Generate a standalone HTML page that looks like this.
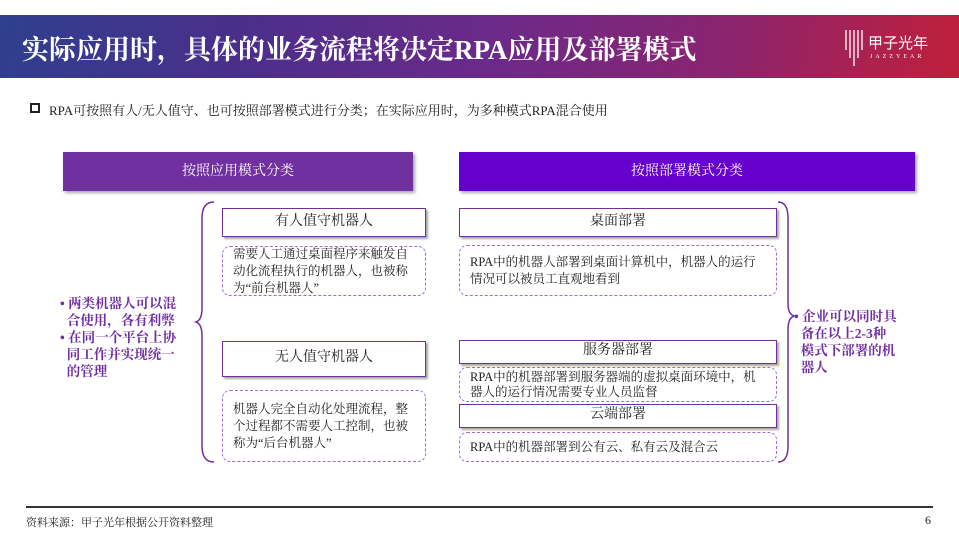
<!DOCTYPE html>
<html><head><meta charset="utf-8"><style>
*{margin:0;padding:0;box-sizing:border-box}
body{width:959px;height:539px;background:#fff;position:relative;overflow:hidden;font-family:"Liberation Serif","Noto Serif CJK SC",serif;color:#222}
.a{position:absolute}
.title{left:0;top:15px;width:959px;height:63px;background:linear-gradient(100deg,#2f3f8f 0%,#4a2f8a 25%,#6a2a8a 50%,#8a2470 75%,#c01f3a 100%)}
.title h1{position:absolute;left:22px;top:13px;color:#fff;font-size:27px;font-weight:bold;letter-spacing:0px;white-space:nowrap}
.hd{color:#fff;font-size:14px;text-align:center;line-height:39px;box-shadow:2px 2px 3px rgba(0,0,0,.35)}
.bx{border:1.5px solid #7030a0;background:#fff;text-align:center;font-size:14px;box-shadow:2px 2px 2px rgba(0,0,0,.35)}
.db{border:1.5px dashed #9a6fd0;border-radius:8px;font-size:12.5px;line-height:17px;padding:0 10px;display:flex;align-items:center}
.pt{color:#7030a0;font-weight:bold;font-size:13.5px;line-height:17px}
</style></head><body>
<div class="a title"><h1>实际应用时，具体的业务流程将决定RPA应用及部署模式</h1>
<svg class="a" style="left:843px;top:13px" width="20" height="38"><g stroke="#fff" stroke-width="1.3" fill="none"><path d="M3 2v20M7 2v28M11 2v36M15 2v28M19 2v20"/></g></svg>
<div class="a" style="left:868px;top:17px;color:#fff;font-size:15px;font-family:'Noto Sans CJK SC',sans-serif;white-space:nowrap">甲子光年</div>
<div class="a" style="left:870px;top:39px;color:#fff;font-size:6px;letter-spacing:3px">JAZZYEAR</div>
</div>
<div class="a" style="left:30px;top:103px;width:10px;height:10px;border:2px solid #222"></div>
<div class="a" style="left:49px;top:100px;font-size:13px;white-space:nowrap">RPA可按照有人/无人值守、也可按照部署模式进行分类；在实际应用时，为多种模式RPA混合使用</div>

<div class="a hd" style="left:63px;top:152px;width:350px;height:39px;background:#7030a0">按照应用模式分类</div>
<div class="a hd" style="left:459px;top:152px;width:456px;height:39px;background:#6600cc">按照部署模式分类</div>

<svg class="a" style="left:190px;top:198px" width="30" height="270"><path d="M24 4 Q12 4 12 20 L12 110 Q12 122 6 124 Q12 126 12 138 L12 248 Q12 264 24 264" stroke="#7030a0" stroke-width="1.5" fill="none"/></svg>
<svg class="a" style="left:772px;top:198px" width="30" height="270"><path d="M6 4 Q16 4 16 20 L16 106 Q16 116 22 118 Q16 120 16 132 L16 248 Q16 264 6 264" stroke="#7030a0" stroke-width="1.5" fill="none"/></svg>

<div class="a pt" style="left:60px;top:295px;width:140px">• 两类机器人可以混<br>&nbsp;&nbsp;合使用，各有利弊<br>• 在同一个平台上协<br>&nbsp;&nbsp;同工作并实现统一<br>&nbsp;&nbsp;的管理</div>
<div class="a pt" style="left:794px;top:308px;width:120px">• 企业可以同时具<br>&nbsp;&nbsp;备在以上2-3种<br>&nbsp;&nbsp;模式下部署的机<br>&nbsp;&nbsp;器人</div>

<div class="a bx" style="left:222px;top:208px;width:204px;height:29px;line-height:25px">有人值守机器人</div>
<div class="a db" style="left:222px;top:246px;width:204px;height:50px">需要人工通过桌面程序来触发自动化流程执行的机器人，也被称为“前台机器人”</div>
<div class="a bx" style="left:222px;top:341px;width:204px;height:36px;line-height:32px">无人值守机器人</div>
<div class="a db" style="left:222px;top:390px;width:204px;height:72px">机器人完全自动化处理流程，整个过程都不需要人工控制，也被称为“后台机器人”</div>

<div class="a bx" style="left:459px;top:208px;width:318px;height:29px;line-height:25px">桌面部署</div>
<div class="a db" style="left:459px;top:245px;width:318px;height:51px">RPA中的机器人部署到桌面计算机中，机器人的运行情况可以被员工直观地看到</div>
<div class="a bx" style="left:459px;top:340px;width:318px;height:24px;line-height:20px">服务器部署</div>
<div class="a db" style="left:459px;top:367px;width:318px;height:35px;line-height:15px">RPA中的机器部署到服务器端的虚拟桌面环境中，机器人的运行情况需要专业人员监督</div>
<div class="a bx" style="left:459px;top:404px;width:318px;height:24px;line-height:20px">云端部署</div>
<div class="a db" style="left:459px;top:432px;width:318px;height:30px">RPA中的机器部署到公有云、私有云及混合云</div>

<div class="a" style="left:26px;top:506px;width:907px;height:1.5px;background:#333"></div>
<div class="a" style="left:26px;top:514px;font-size:11px;white-space:nowrap">资料来源：甲子光年根据公开资料整理</div>
<div class="a" style="left:925px;top:513px;font-size:12px">6</div>
</body></html>
